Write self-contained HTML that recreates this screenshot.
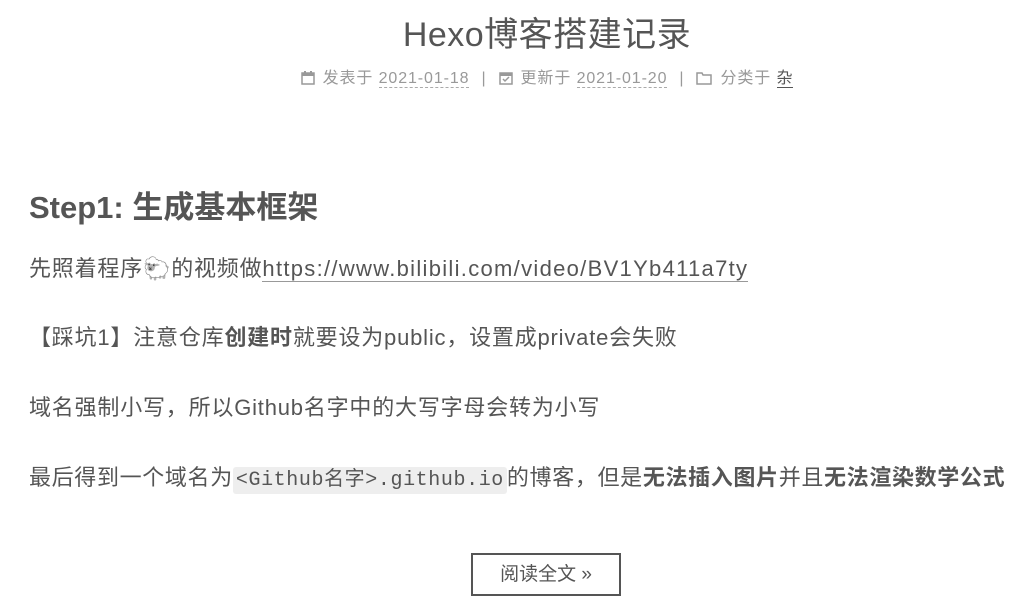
<!DOCTYPE html>
<html><head><meta charset="utf-8"><style>
body{margin:0;background:#fff;font-family:"Liberation Sans","Noto Sans CJK SC",sans-serif;color:#555;width:1017px;height:605px;overflow:hidden;position:relative}
.t{position:absolute;top:7px;left:0;width:1094px;text-align:center;font-size:34px;color:#555;font-weight:400;letter-spacing:0.5px}
.m{position:absolute;top:64px;left:0;width:1094px;text-align:center;font-size:16px;color:#999;letter-spacing:0.9px}
.m span.d{border-bottom:1px dashed #aaa;color:#999}
.m .sep{margin:0 12px}
.m svg{vertical-align:-2px;margin-right:8px}
h2{position:absolute;top:182px;left:29px;margin:0;font-size:31px;font-weight:700;color:#555}
p{position:absolute;left:29px;margin:0;font-size:22px;line-height:30px;letter-spacing:0.8px;white-space:nowrap}
a{color:#555;text-decoration:none;border-bottom:1px solid #999;letter-spacing:1.3px}
code{font-family:"Liberation Mono","Noto Sans CJK SC",monospace;background:#eee;font-size:20px;padding:2px 3px;border-radius:3px;letter-spacing:0.6px}
b{font-weight:700}
.btn{position:absolute;left:471px;top:553px;width:150px;height:43px;border:2px solid #555;box-sizing:border-box;text-align:center;line-height:39px;font-size:19px;color:#555}
</style></head><body>
<div class="t">Hexo博客搭建记录</div>
<div class="m"><svg width="14" height="14" viewBox="0 0 14 14"><rect x="1" y="2" width="12" height="11" fill="none" stroke="#999" stroke-width="1.5"/><rect x="1" y="2" width="12" height="3" fill="#999"/><rect x="3" y="0" width="2" height="3" fill="#999"/><rect x="9" y="0" width="2" height="3" fill="#999"/></svg>发表于 <span class="d">2021-01-18</span><span class="sep">|</span><svg width="14" height="14" viewBox="0 0 14 14"><rect x="1" y="2" width="12" height="11" fill="none" stroke="#999" stroke-width="1.5"/><rect x="1" y="2" width="12" height="3" fill="#999"/><path d="M4 8l2 2 4-4" stroke="#999" fill="none" stroke-width="1.5"/></svg>更新于 <span class="d">2021-01-20</span><span class="sep">|</span><svg width="16" height="14" viewBox="0 0 16 14"><path d="M1 2h5l1 2h8v9H1z" fill="none" stroke="#999" stroke-width="1.5"/></svg>分类于 <span style="border-bottom:1px solid #555;color:#555">杂</span></div>
<h2>Step1: 生成基本框架</h2>
<p style="top:254px">先照着程序🐑的视频做<a>https://www.bilibili.com/video/BV1Yb411a7ty</a></p>
<p style="top:323px">【踩坑1】注意仓库<b>创建时</b>就要设为public，设置成private会失败</p>
<p style="top:393px">域名强制小写，所以Github名字中的大写字母会转为小写</p>
<p style="top:463px;letter-spacing:0.65px">最后得到一个域名为<code>&lt;Github名字&gt;.github.io</code>的博客，但是<b>无法插入图片</b>并且<b>无法渲染数学公式</b></p>
<div class="btn">阅读全文 »</div>
</body></html>
